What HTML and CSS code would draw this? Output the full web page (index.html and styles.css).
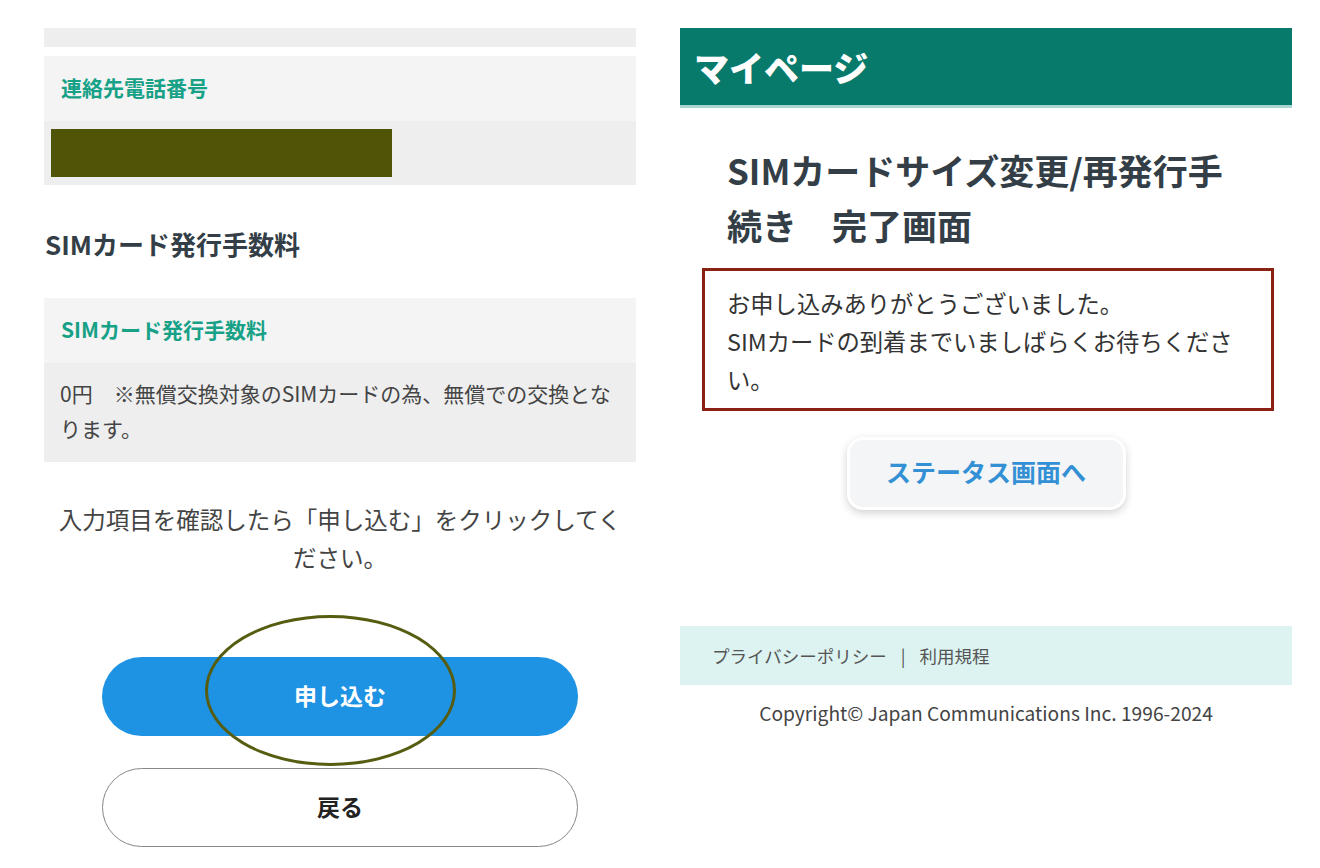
FILE: index.html
```html
<!DOCTYPE html>
<html lang="ja">

<head>
    <meta charset="UTF-8">
    <meta name="viewport" content="width=device-width, initial-scale=1.0">
    <title>SIMカードサイズ変更/再発行手続き</title>
    <link rel="stylesheet" href="styles.css">
</head>

<body>

    <div class="page">

        <!-- 確認画面 -->
        <section class="confirm">
            <div class="strip"></div>

            <dl class="field">
                <dt>連絡先電話番号</dt>
                <dd class="field-masked"><span class="masked"></span></dd>
            </dl>

            <h2 class="section-title">SIMカード発行手数料</h2>

            <dl class="field">
                <dt>SIMカード発行手数料</dt>
                <dd>0円　※無償交換対象のSIMカードの為、無償での交換となります。</dd>
            </dl>

            <p class="note">入力項目を確認したら「申し込む」をクリックしてください。</p>

            <div class="actions">
                <button class="btn btn-primary">申し込む<span class="mark"></span></button>
                <button class="btn btn-back">戻る</button>
            </div>
        </section>

        <!-- 完了画面 -->
        <section class="done">
            <header class="mypage-header">マイページ</header>

            <h1 class="done-title">SIMカードサイズ変更/再発行手続き　完了画面</h1>

            <div class="message">
                <p>お申し込みありがとうございました。<br>SIMカードの到着までいましばらくお待ちください。</p>
            </div>

            <div class="status-wrap">
                <a class="btn-status" href="#">ステータス画面へ</a>
            </div>

            <footer class="site-footer">
                <nav class="footer-links">
                    <a href="#">プライバシーポリシー</a>
                    <span class="sep">|</span>
                    <a href="#">利用規程</a>
                </nav>
                <p class="copyright">Copyright© Japan Communications Inc. 1996-2024</p>
            </footer>
        </section>

    </div>

</body>

</html>
```

FILE: styles.css
```css
* {
    box-sizing: border-box;
}

body {
    margin: 0;
    background-color: #fff;
    font-family: "Noto Sans CJK JP", "Noto Sans", sans-serif;
    color: #333;
}

.page {
    display: flex;
    align-items: flex-start;
    gap: 44px;
    padding: 28px 0 0 44px;
}

/* ---------- 左：確認画面 ---------- */

.confirm {
    width: 592px;
}

.strip {
    height: 19px;
    background-color: #eeeeee;
}

.field {
    margin: 9px 0 0;
}

.field dt {
    padding: 16px 17px 19px;
    line-height: 30px;
    font-size: 21px;
    font-weight: bold;
    color: #17a187;
    background-color: #f4f4f4;
}

.field dd {
    margin: 0;
    padding: 13px 16px 16px;
    font-size: 21px;
    line-height: 35px;
    color: #444;
    background-color: #eeeeee;
}

.field dd.field-masked {
    padding: 8px 7px;
}

.masked {
    display: block;
    width: 341px;
    height: 48px;
    background-color: #4f5406;
}

.section-title {
    margin: 44px 0 39px 1px;
    font-size: 26px;
    line-height: 30px;
    color: #333e46;
}

.section-title + .field {
    margin-top: 0;
}

.note {
    margin: 38px 0 0;
    padding: 0 12px;
    text-align: center;
    font-size: 23.5px;
    line-height: 38px;
    color: #444;
}

.actions {
    display: flex;
    flex-direction: column;
    align-items: center;
    gap: 32px;
    margin-top: 81px;
}

.btn {
    position: relative;
    width: 476px;
    height: 79px;
    padding: 0 0 3px;
    border-radius: 40px;
    font-family: inherit;
    font-size: 23px;
    font-weight: bold;
}

.btn-primary {
    border: none;
    background-color: #1e92e3;
    color: #fff;
}

.btn-back {
    border: 1.5px solid #888;
    background-color: #fff;
    color: #222;
}

/* 注釈の丸 */
.mark {
    position: absolute;
    left: 103px;
    top: -42px;
    width: 251px;
    height: 151px;
    border: 3px solid #565d10;
    border-radius: 50%;
    pointer-events: none;
}

/* ---------- 右：完了画面 ---------- */

.done {
    width: 612px;
}

.mypage-header {
    height: 80px;
    padding-left: 14px;
    line-height: 78px;
    font-size: 35px;
    font-weight: 900;
    color: #fff;
    background-color: #077a6b;
    border-bottom: 3px solid #a9d6d0;
}

.done-title {
    margin: 34px 47px 0;
    font-size: 35px;
    line-height: 55px;
    color: #333e46;
}

.message {
    margin: 16px 18px 0 22px;
    padding: 13px 22px 10px;
    border: 3px solid #8a2214;
}

.message p {
    margin: 0;
    font-size: 23.3px;
    line-height: 38px;
    color: #333;
}

.status-wrap {
    display: flex;
    justify-content: center;
    margin-top: 26px;
}

.btn-status {
    display: flex;
    align-items: center;
    justify-content: center;
    width: 279px;
    height: 73px;
    padding-bottom: 5px;
    border: 3px solid #fff;
    border-radius: 16px;
    background-color: #f4f5f6;
    box-shadow: 0 3px 8px rgba(0, 0, 0, 0.18);
    font-size: 25px;
    font-weight: bold;
    color: #3390d5;
    text-decoration: none;
}

.site-footer {
    margin-top: 116px;
}

.footer-links {
    display: flex;
    align-items: center;
    gap: 14px;
    height: 59px;
    padding: 0 0 1px 32px;
    background-color: #dcf3f1;
    font-size: 17.5px;
}

.footer-links a {
    color: #555;
    text-decoration: none;
}

.footer-links .sep {
    color: #555;
}

.copyright {
    margin: 15px 0 0;
    text-align: center;
    font-size: 19.2px;
    line-height: 26px;
    color: #444;
}
```
